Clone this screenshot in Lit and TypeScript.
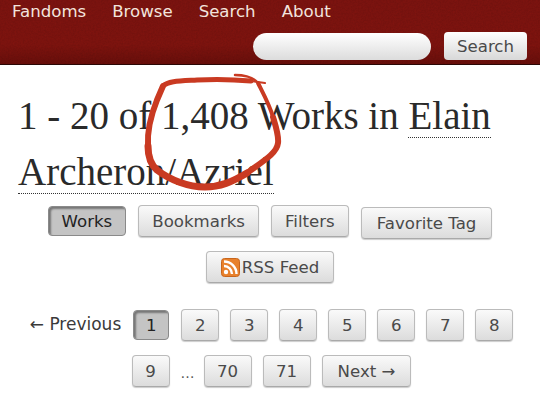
import { LitElement, css, html } from "lit";
import { customElement } from "lit/decorators.js";

const PAGES_ROW_ONE = ["2", "3", "4", "5", "6", "7", "8", "9"];

@customElement("app-root")
export class AppRoot extends LitElement {
  static styles = css`
    :host {
      display: block;
      position: relative;
      width: 540px;
      height: 405px;
      overflow: hidden;
      background: #fff;
      font-family: "DejaVu Sans", Verdana, sans-serif;
      color: #2a2a2a;
    }

    /* Header */
    .header {
      position: relative;
      height: 65px;
      box-sizing: border-box;
      overflow: hidden;
      border-bottom: 1px solid #2c0705;
      background: linear-gradient(#7e1410, #80140f 70%, #6b0f0b);
    }
    .grain {
      position: absolute;
      inset: 0;
      width: 100%;
      height: 100%;
      opacity: 0.09;
    }
    .nav {
      position: relative;
      display: flex;
      gap: 26px;
      padding: 0 0 0 12px;
      height: 22px;
      align-items: center;
      font-size: 16.6px;
      color: #f3e4dd;
    }
    .search {
      position: relative;
      display: flex;
      justify-content: flex-end;
      align-items: center;
      gap: 13px;
      padding: 10px 13px 0 0;
    }
    .search-input {
      width: 178px;
      height: 27px;
      border-radius: 14px;
      background: linear-gradient(#fff, #dcdcdc);
    }
    .search-btn {
      display: flex;
      align-items: center;
      justify-content: center;
      width: 83px;
      height: 28px;
      border-radius: 4px;
      font-size: 16.6px;
      color: #4a4a4a;
      background: linear-gradient(#fff, #d8d8d8);
    }

    /* Heading */
    h2 {
      margin: 0;
      padding: 23px 0 0 18px;
      font-family: "Liberation Serif", Georgia, serif;
      font-weight: 400;
      font-size: 39px;
      line-height: 56px;
      color: #2a2a2a;
    }
    .tag {
      border-bottom: 1px dotted #333;
    }

    /* Buttons */
    .actions,
    .pages {
      display: flex;
      flex-wrap: wrap;
      justify-content: center;
      align-items: flex-start;
    }
    .actions {
      gap: 12px 12px;
      padding: 0 30px;
      margin-top: 5px;
    }
    .pages {
      gap: 14px 11px;
      padding: 0 20px 0 23px;
      margin-top: 26px;
    }
    .btn {
      display: inline-flex;
      align-items: center;
      justify-content: center;
      box-sizing: border-box;
      height: 32px;
      padding: 0 13px;
      border: 1px solid #bbb;
      border-bottom-color: #a9a9a9;
      border-radius: 4px;
      font-size: 16.6px;
      color: #4a4a4a;
      background: linear-gradient(#fafafa, #dcdcdc);
      box-shadow: 0 1px 1px #ccc;
    }
    .btn.on {
      height: 30px;
      margin-top: 1px;
      color: #222;
      border-color: #8a8a8a;
      background: #c4c4c4;
      box-shadow: inset 2px 2px 2px #777;
    }
    .btn.low {
      margin-top: 2px;
      padding: 0 15px;
    }
    .btn.feed {
      padding: 0 14px;
    }
    .btn.next {
      padding: 0 15px;
    }
    .page {
      width: 38px;
      padding: 0;
    }
    .btn.page.on {
      width: 36px;
      padding: 0;
      margin-right: 1px;
    }
    .wide {
      width: 48px;
      padding: 0;
    }
    .rss {
      width: 19px;
      height: 19px;
      margin: 0 2px 0 0;
    }
    .plain {
      margin-right: 1px;
      font-size: 17px;
      line-height: 30px;
      color: #3a3a3a;
    }
    .gap {
      width: 12px;
      height: 32px;
      font-size: 14px;
      line-height: 37px;
      text-align: center;
      color: #555;
    }

    /* Hand-drawn circle over the count */
    .scribble {
      position: absolute;
      left: 0;
      top: 0;
      width: 540px;
      height: 405px;
      pointer-events: none;
    }
  `;

  render() {
    return html`
      <div class="header">
        <svg class="grain" aria-hidden="true">
          <filter id="grain">
            <feTurbulence type="fractalNoise" baseFrequency="0.6" numOctaves="2" />
            <feColorMatrix values="0 0 0 0 0  0 0 0 0 0  0 0 0 0 0  1.6 0 0 0 -0.3" />
          </filter>
          <rect width="100%" height="100%" filter="url(#grain)" />
        </svg>
        <div class="nav">
          <span>Fandoms</span><span>Browse</span><span>Search</span><span>About</span>
        </div>
        <div class="search">
          <div class="search-input"></div>
          <div class="search-btn">Search</div>
        </div>
      </div>

      <h2>1 - 20 of 1,408 Works in <span class="tag">Elain Archeron/Azriel</span></h2>

      <div class="actions">
        <span class="btn on">Works</span>
        <span class="btn">Bookmarks</span>
        <span class="btn">Filters</span>
        <span class="btn low">Favorite Tag</span>
        <span class="btn feed">
          <svg class="rss" viewBox="0 0 19 19" aria-hidden="true">
            <rect x="0.5" y="0.5" width="18" height="18" rx="3" fill="#e8812c" stroke="#c9661c" />
            <circle cx="5" cy="14" r="2.2" fill="#fff" />
            <path d="M3 8a8 8 0 0 1 8 8M3 3.5a12.500 12.500 0 0 1 12.500 12.500" fill="none" stroke="#fff" stroke-width="2.400" />
          </svg>RSS Feed
        </span>
      </div>

      <div class="pages">
        <span class="plain">← Previous</span>
        <span class="btn page on">1</span>
        ${PAGES_ROW_ONE.map((p) => html`<span class="btn page">${p}</span>`)}
        <span class="gap">…</span>
        <span class="btn wide">70</span>
        <span class="btn wide">71</span>
        <span class="btn next">Next →</span>
      </div>

      <svg class="scribble" viewBox="0 0 540 405" aria-hidden="true">
        <g fill="none" stroke="#c93a22" stroke-linecap="round" stroke-linejoin="round">
          <path stroke-width="2.500" d="M235 75C245 75 253 77 258 83" />
          <path stroke-width="4" d="M258 83C264 95 270 106 273 117" />
          <path stroke-width="6" d="M273 117C276 127 279 136 278 143C277 152 268 158 247 173" />
          <path stroke-width="7" d="M247 173C232 182 220 187 205 187C188 187 170 180 157 170C150 164 148 156 148 146" />
          <path stroke-width="6" d="M148 146C147 130 151 115 157 100L163 86" />
          <path stroke-width="5" d="M163 86C168 81 180 81 197 80C215 79 240 80 251 81" />
          <path stroke-width="2" d="M251 81L265 83" />
        </g>
      </svg>
    `;
  }
}
